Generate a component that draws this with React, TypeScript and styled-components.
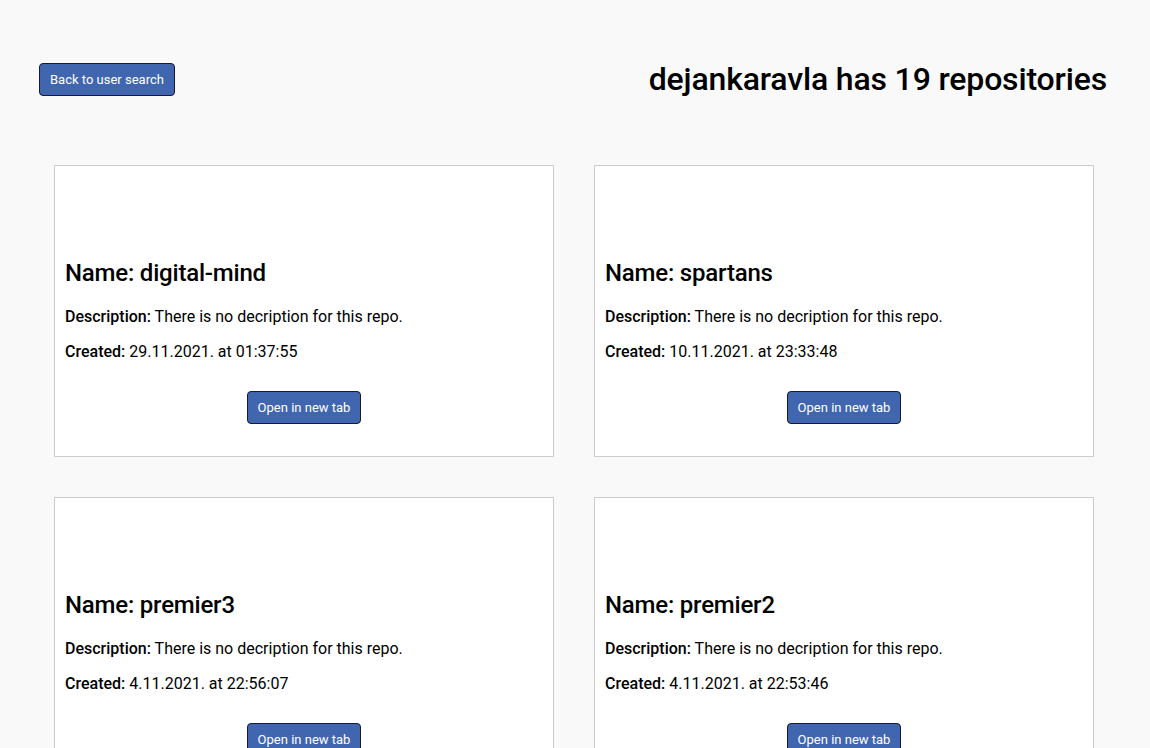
import React from "react";
import styled, { createGlobalStyle } from "styled-components";

const GlobalStyle = createGlobalStyle`
  html, body {
    margin: 0;
    padding: 0;
    background: #f9f9f9;
    font-family: Roboto, "Liberation Sans", Arial, sans-serif;
    color: #000;
  }
`;

const Page = styled.div`
  min-height: 748px;
`;

const Header = styled.header`
  display: flex;
  align-items: center;
  justify-content: space-between;
  padding: 60px 43px 0 39px;
`;

const Title = styled.h1`
  margin: 0;
  font-size: 32px;
  font-weight: 500;
  letter-spacing: -0.16px;
  line-height: normal;
`;

const Button = styled.button`
  background: #4166b0;
  color: #fff;
  border: 1px solid #1c1c1c;
  border-radius: 4px;
  padding: 0 10px;
  height: 33px;
  font-family: Roboto, "Liberation Sans", Arial, sans-serif;
  font-size: 13px;
  cursor: pointer;
`;

const Grid = styled.main`
  display: grid;
  grid-template-columns: repeat(2, 500px);
  column-gap: 40px;
  row-gap: 40px;
  padding: 67px 0 0 54px;
`;

const Card = styled.article`
  box-sizing: border-box;
  background: #fff;
  border: 1px solid #cccccc;
  padding: 73px 10px 0;
`;

const Name = styled.h2`
  margin: 20px 0;
  font-size: 24px;
  font-weight: 500;
  letter-spacing: -0.2px;
  line-height: normal;
`;

const Line = styled.p`
  margin: 16px 0;
  font-size: 16px;
  line-height: normal;
`;

const Label = styled.strong`
  font-weight: 500;
`;

const Actions = styled.div`
  display: flex;
  justify-content: center;
  margin: 30px 0 32px;
`;

const repos = [
  { name: "digital-mind", created: "29.11.2021. at 01:37:55" },
  { name: "spartans", created: "10.11.2021. at 23:33:48" },
  { name: "premier3", created: "4.11.2021. at 22:56:07" },
  { name: "premier2", created: "4.11.2021. at 22:53:46" },
];

export default function App() {
  return (
    <Page>
      <GlobalStyle />
      <Header>
        <Button>Back to user search</Button>
        <Title>dejankaravla has 19 repositories</Title>
      </Header>
      <Grid>
        {repos.map((r) => (
          <Card key={r.name}>
            <Name>Name: {r.name}</Name>
            <Line>
              <Label>Description:</Label> There is no decription for this repo.
            </Line>
            <Line>
              <Label>Created:</Label> {r.created}
            </Line>
            <Actions>
              <Button>Open in new tab</Button>
            </Actions>
          </Card>
        ))}
      </Grid>
    </Page>
  );
}
